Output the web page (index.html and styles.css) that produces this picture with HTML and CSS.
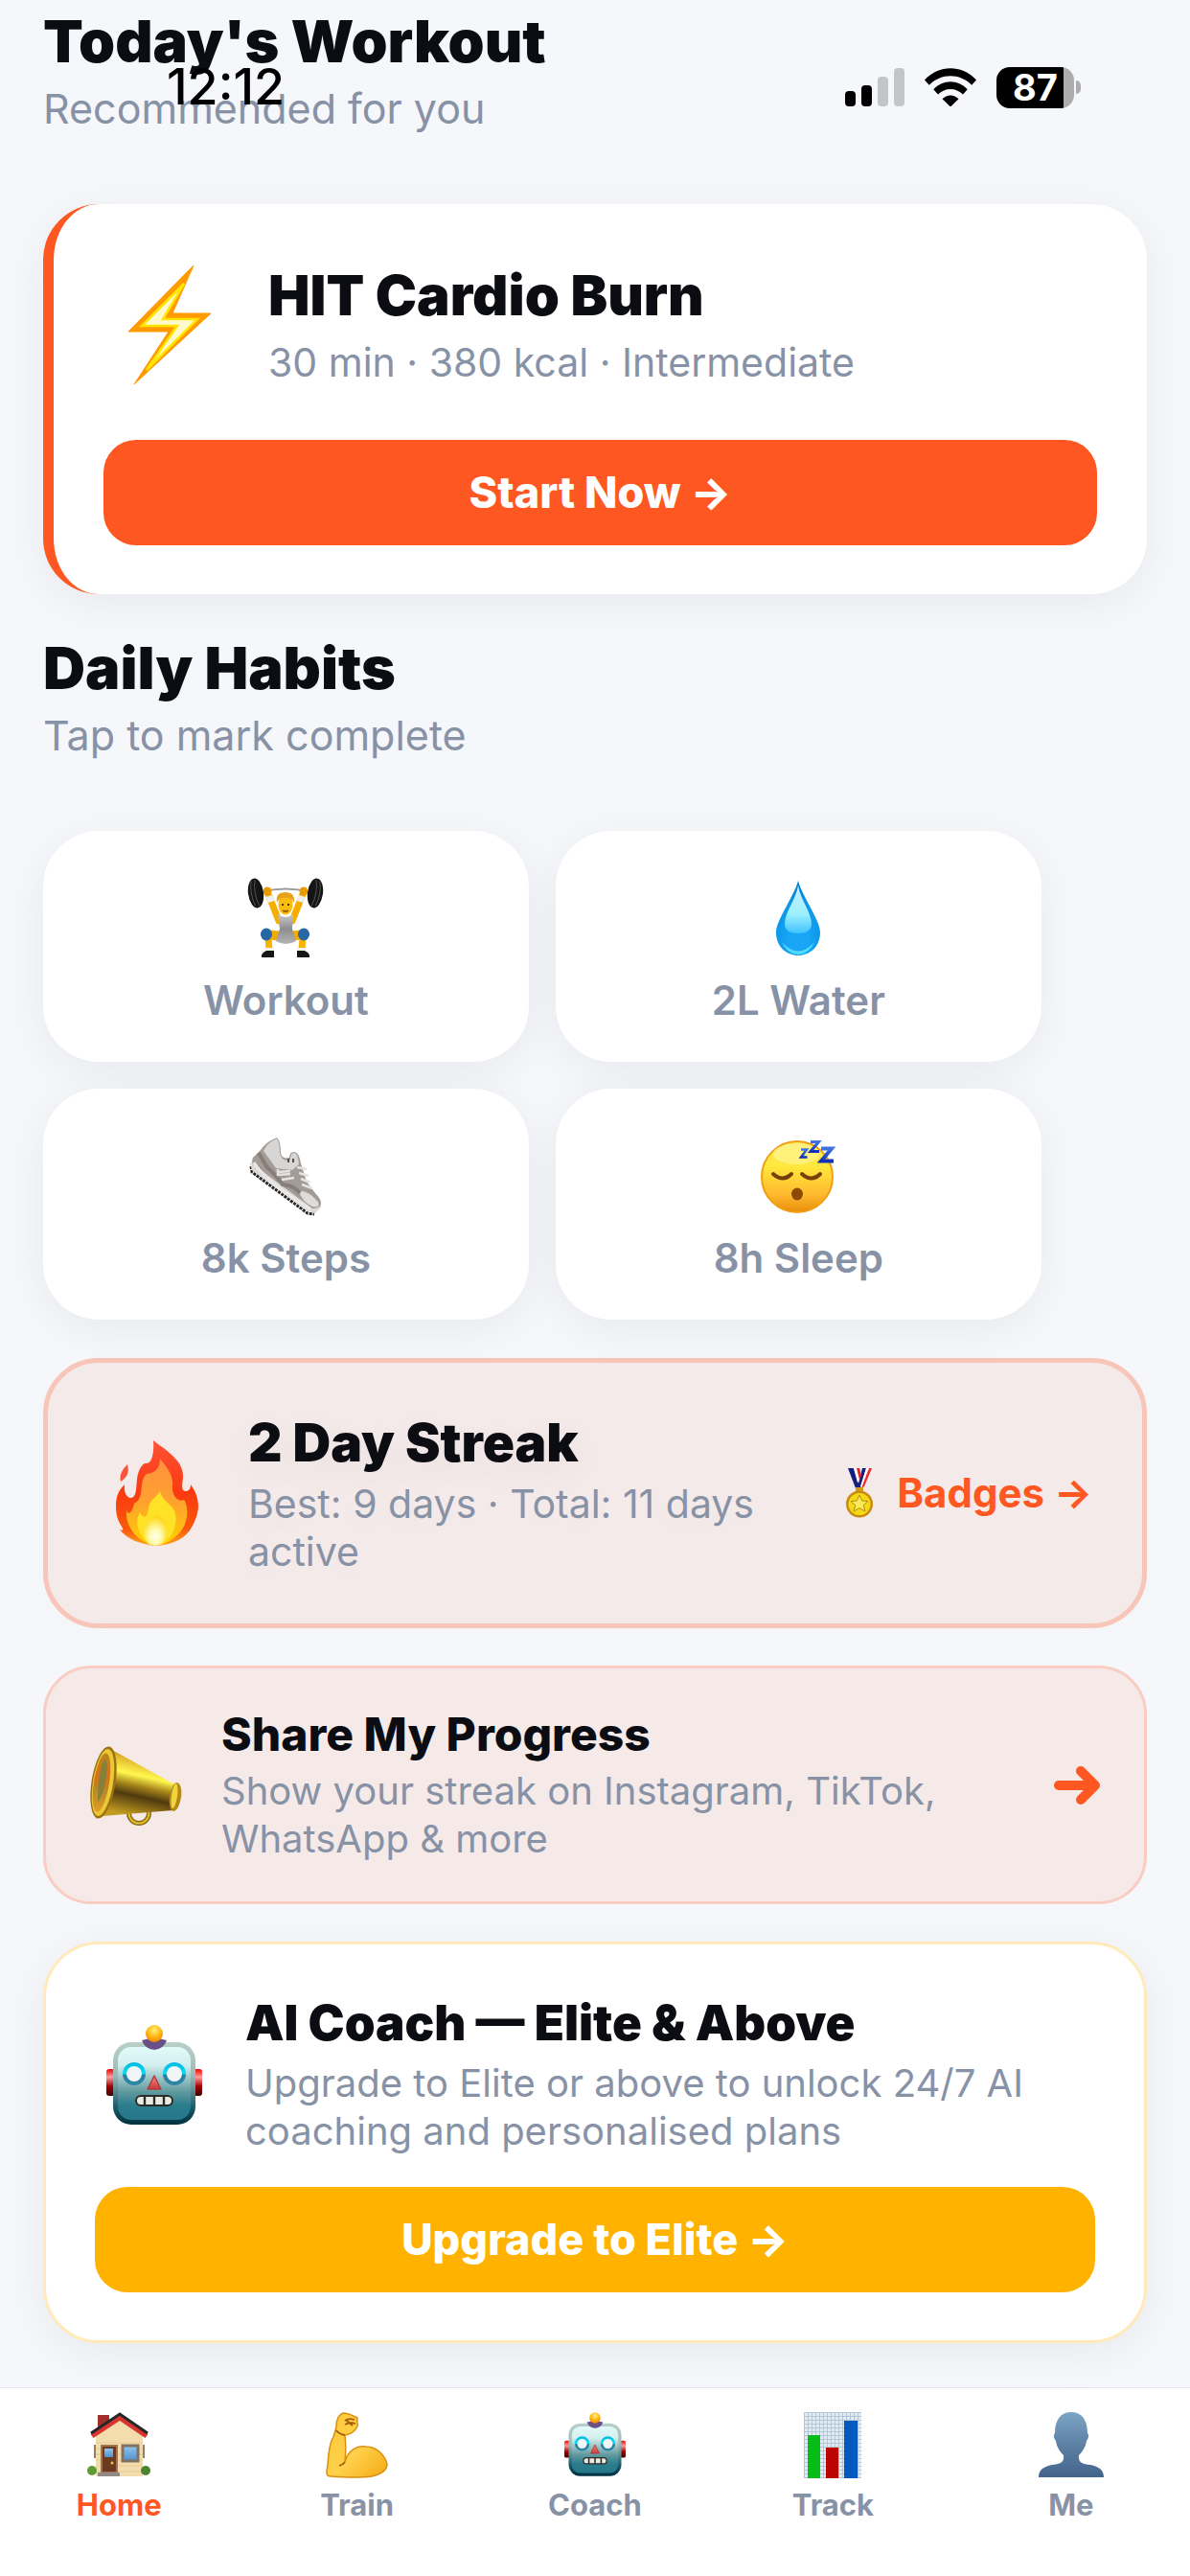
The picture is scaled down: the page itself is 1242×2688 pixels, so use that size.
FILE: index.html
```html
<!DOCTYPE html>
<html lang="en">
<head>
<meta charset="utf-8">
<meta name="viewport" content="width=device-width, initial-scale=1">
<title>Fitness Home</title>
<link rel="stylesheet" href="styles.css">
</head>
<body>
<svg class="defs" aria-hidden="true">
  <defs>
    <linearGradient id="robotHead" x1="0" y1="0" x2="0" y2="1"><stop offset="0" stop-color="#e2fafa"/><stop offset=".25" stop-color="#d3efee"/><stop offset=".62" stop-color="#5f989d"/><stop offset=".8" stop-color="#2a7d8d"/><stop offset="1" stop-color="#277889"/></linearGradient>
    <linearGradient id="robotRim" x1="0" y1="0" x2="0" y2="1"><stop offset="0" stop-color="#b9d0c9"/><stop offset=".4" stop-color="#9db9b6"/><stop offset=".8" stop-color="#155868"/><stop offset="1" stop-color="#00303e"/></linearGradient>
    <linearGradient id="robotEar" x1="0" y1="0" x2="0" y2="1"><stop offset="0" stop-color="#f20000"/><stop offset=".3" stop-color="#ff9c9c"/><stop offset=".65" stop-color="#a00000"/><stop offset="1" stop-color="#3c0000"/></linearGradient>
    <linearGradient id="robotEye" x1="0" y1="0" x2="0" y2="1"><stop offset="0" stop-color="#00b7e0"/><stop offset=".5" stop-color="#00e1f5"/><stop offset=".55" stop-color="#2b7d9c"/><stop offset="1" stop-color="#2f86a6"/></linearGradient>
    <radialGradient id="robotBall" cx=".5" cy=".3" r=".7"><stop offset="0" stop-color="#fff27a"/><stop offset=".6" stop-color="#ffb410"/><stop offset="1" stop-color="#f57f00"/></radialGradient>
    <linearGradient id="robotNose" x1="0" y1="0" x2="0" y2="1"><stop offset="0" stop-color="#ff8a80"/><stop offset="1" stop-color="#c23a3a"/></linearGradient>
  </defs>
  <symbol id="robot" viewBox="0 0 100 104">
    <rect x="0" y="46" width="9" height="28" rx="3" fill="url(#robotEar)"/>
    <rect x="91" y="46" width="9" height="28" rx="3" fill="url(#robotEar)"/>
    <rect x="7" y="18" width="86" height="86" rx="19" fill="url(#robotRim)"/>
    <rect x="12" y="23" width="76" height="76" rx="14" fill="url(#robotHead)"/>
    <path d="M37 16Q50 12 63 16Q60 25 50 26Q40 25 37 16Z" fill="#6a5088"/>
    <ellipse cx="50" cy="9" rx="9" ry="9" fill="url(#robotBall)"/>
    <circle cx="29" cy="51" r="12" fill="url(#robotEye)"/><circle cx="71" cy="51" r="12" fill="url(#robotEye)"/>
    <circle cx="29" cy="51" r="8" fill="#f0f6f7"/><circle cx="71" cy="51" r="8" fill="#f0f6f7"/>
    <path d="M50 53L57 67H43Z" fill="url(#robotNose)" stroke="#b23c40" stroke-width="1.5" stroke-linejoin="round"/>
    <rect x="31" y="74" width="38" height="10" rx="5" fill="#e9eae4" stroke="#2b2b28" stroke-width="2"/>
    <path d="M40 74V84M50 74V84M60 74V84" stroke="#2b2b28" stroke-width="2.4"/>
  </symbol>
</svg>

<div class="status" aria-label="Device status">
  <span class="status-time">12:12</span>
  <span class="status-icons">
    <svg width="62" height="40" viewBox="0 0 62 40" role="img" aria-label="Signal">
      <rect x="0" y="24" width="11" height="16" rx="4"/><rect x="17" y="18" width="11" height="22" rx="4"/>
      <rect x="34" y="9" width="11" height="31" rx="4" fill="#c4c5c9"/><rect x="51" y="0" width="11" height="40" rx="4" fill="#c4c5c9"/>
    </svg>
    <svg width="54" height="40" viewBox="0 0 54 40" role="img" aria-label="Wi-Fi">
      <path d="M0 12.500C15-3.800 39-3.800 54 12.500L49.200 17.700C37 5 17 5 4.800 17.700Z"/>
      <path d="M9.200 22.300C19 11.600 35 11.600 44.800 22.300L40 27.500C33 20 21 20 14 27.500Z"/>
      <path d="M18.500 32.300C23.300 27.200 30.700 27.200 35.500 32.300L27 40.500Z"/>
    </svg>
    <span class="battery"><span class="battery-level">87</span><span class="battery-cap"></span></span>
  </span>
</div>

<main class="page">
  <header class="section-head">
    <h2>Today's Workout</h2>
    <p>Recommended for you</p>
  </header>

  <section class="card workout">
    <div class="workout-row">
      <span class="icon icon-workout">
        <svg width="90" height="126" viewBox="0 0 90 126" aria-hidden="true">
          <path d="M70 1L48 51H88L8 125L44 70H2Z" fill="#ff9a00" stroke="#ff9a00" stroke-width="1" stroke-linejoin="round"/>
          <path d="M60 20L38 57H74L21 110L53 64H16Z" fill="#ffface" stroke="#ffe600" stroke-width="2.500"/>
        </svg>
      </span>
      <div class="copy copy-wide">
        <h3 class="title-xl">HIT Cardio Burn</h3>
        <p>30 min · 380 kcal · Intermediate</p>
      </div>
    </div>
    <button class="cta cta-orange" type="button">Start Now →</button>
  </section>

  <header class="section-head section-head-next">
    <h2>Daily Habits</h2>
    <p>Tap to mark complete</p>
  </header>

  <div class="habits">
    <button class="habit" type="button">
      <svg width="80" height="84" viewBox="0 0 80 84" aria-hidden="true">
        <defs><linearGradient id="suit" x1="0" y1="0" x2="0" y2="1"><stop offset="0" stop-color="#c9c9cc"/><stop offset=".5" stop-color="#8e8e92"/><stop offset="1" stop-color="#b5b5b5"/></linearGradient></defs>
        <path d="M14 15Q40 8 66 15" fill="none" stroke="#9a9a9a" stroke-width="2"/>
        <path d="M22 17L33 45M58 17L47 45" stroke="#f7ae00" stroke-width="7" stroke-linecap="round"/>
        <path d="M23 19L25 25M57 19L55 25" stroke="#eef1f4" stroke-width="7"/>
        <path d="M20 59L36 61M59 59L44 61" stroke="#f4ab00" stroke-width="10" stroke-linecap="round"/>
        <path d="M22 63L23 74M58 63L57 74" stroke="#f7b500" stroke-width="7"/>
        <path d="M32 38Q40 44 48 38L47 53L51 66Q40 72 30 66L34 53Z" fill="url(#suit)"/>
        <circle cx="21" cy="14" r="4.500" fill="#e79b00"/><circle cx="59" cy="14" r="4.500" fill="#e79b00"/>
        <ellipse cx="40" cy="28" rx="7.500" ry="10.500" fill="#fcbc0d"/>
        <path d="M31 26Q29 15 40 15Q50 15 49 26Q46 20 40 21Q34 20 31 26Z" fill="#e8a21a"/>
        <path d="M37 27V29M43 27V29" stroke="#5a3200" stroke-width="2"/><path d="M37 34Q40 36 43 34" stroke="#9a6600" stroke-width="2" fill="none"/>
        <ellipse cx="20" cy="59" rx="6" ry="6.500" fill="#2867a5"/><ellipse cx="59" cy="59" rx="6" ry="6.500" fill="#2867a5"/>
        <path d="M19 73H28V76H19ZM52 73H61V76H52Z" fill="#f3f3f3"/>
        <path d="M15 83Q14 79 20 76H28L28 83ZM65 83Q66 79 60 76H52L52 83Z" fill="#161616"/>
        <g transform="rotate(-8 9 16)"><ellipse cx="9" cy="16" rx="8" ry="15.500" fill="#151515"/><path d="M6 3Q2 16 7 29M10 2Q6 16 11 30" stroke="#505050" fill="none"/></g>
        <g transform="rotate(8 71 16)"><ellipse cx="71" cy="16" rx="8" ry="15.500" fill="#151515"/><path d="M74 3Q78 16 73 29M70 2Q74 16 69 30" stroke="#505050" fill="none"/></g>
      </svg>
      <span>Workout</span>
    </button>
    <button class="habit" type="button">
      <svg width="50" height="84" viewBox="0 0 50 84" aria-hidden="true">
        <defs>
          <radialGradient id="drop" cx=".5" cy=".8" r=".75"><stop offset="0" stop-color="#1ba6f8"/><stop offset=".3" stop-color="#17a5f5"/><stop offset=".65" stop-color="#0e98ea"/><stop offset="1" stop-color="#0583cf"/></radialGradient>
          <linearGradient id="dropShine" x1="0" y1="0" x2="0" y2="1"><stop offset="0" stop-color="#c9efff"/><stop offset=".6" stop-color="#9cf0ff"/><stop offset="1" stop-color="#3fc1ff"/></linearGradient>
        </defs>
        <path d="M25 3C29 19 48 44 48 57C48 72 37 81 25 81C13 81 2 72 2 57C2 44 21 19 25 3Z" fill="url(#drop)"/>
        <path d="M8 67Q25 86 42 67Q37 79 25 80Q13 79 8 67Z" fill="#54dcff"/>
        <path d="M25 8C27 22 39 36 39 48C39 55 33 58 25 58C17 58 11 55 11 48C11 36 23 22 25 8Z" fill="url(#dropShine)"/>
      </svg>
      <span>2L Water</span>
    </button>
    <button class="habit" type="button">
      <svg width="76" height="84" viewBox="0 0 76 84" aria-hidden="true">
        <path d="M2 32L3 38L61 81L68 82" fill="none" stroke="#2a2826" stroke-width="3" stroke-dasharray="3 1"/>
        <path d="M1 29L3 36L62 79L69 81L75 75L74 69L5 25Z" fill="#ddd9d6"/>
        <path d="M29 2Q17 7 12 15L4 23Q1 28 7 32L66 76Q73 76 75 72Q76 67 69 60L60 48L54 29Q52 17 47 17Q42 17 42 23Q34 25 33 18Q33 6 29 2Z" fill="#a39b96"/>
        <path d="M29 3Q18 8 15 16L28 34L45 36L52 30Q51 18 47 18Q43 18 43 25Q34 28 32 18Q32 8 29 3Z" fill="#d8d6d4"/>
        <path d="M52 58Q60 56 72 69Q75 76 66 74Q55 69 52 58Z" fill="#dedcda"/>
        <path d="M10 18L18 32L28 42L35 51Q47 52 53 60" fill="none" stroke="#877e79" stroke-width="4"/>
        <path d="M30 38L43 37M34 46L47 44M50 33L60 35M52 39L62 42M54 45L64 49M55 51L66 55M30 35V41L43 40" stroke="#e5e3e1" stroke-width="2.500" fill="none"/>
        <path d="M5 28Q12 40 32 55L64 77" stroke="#ebe9e7" stroke-width="3" fill="none"/>
        <path d="M41 24V28M46 24V28" stroke="#55504d" stroke-width="2"/>
      </svg>
      <span>8k Steps</span>
    </button>
    <button class="habit" type="button">
      <svg width="80" height="84" viewBox="0 0 80 84" aria-hidden="true">
        <defs>
          <linearGradient id="face" x1="0" y1="0" x2="0" y2="1"><stop offset="0" stop-color="#ffe95a"/><stop offset=".35" stop-color="#ffe83d"/><stop offset=".75" stop-color="#ffb92e"/><stop offset="1" stop-color="#e88d0a"/></linearGradient>
          <linearGradient id="zed" x1="0" y1="0" x2="0" y2="1"><stop offset="0" stop-color="#3f74e0"/><stop offset="1" stop-color="#1030b8"/></linearGradient>
        </defs>
        <circle cx="39" cy="43" r="37" fill="url(#face)" stroke="#f0a012" stroke-width="2"/>
        <ellipse cx="38" cy="19" rx="24" ry="11" fill="#fff8a2" opacity=".55"/>
        <path d="M14 40Q24 49 33 40M44 40Q54 49 63 40" fill="none" stroke="#73400a" stroke-width="4" stroke-linecap="round"/>
        <ellipse cx="39" cy="61" rx="6" ry="6.500" fill="#8d4a05"/>
        <g fill="none" stroke="url(#zed)" stroke-linejoin="miter"><path d="M43 14.500H49L43 22.500H49.500" stroke-width="2.500"/><path d="M53 6.500H61.500L53 16.500H62" stroke-width="3"/><path d="M64 13.500H75L64 26.500H77" stroke-width="4"/></g>
      </svg>
      <span>8h Sleep</span>
    </button>
  </div>

  <section class="card streak">
    <span class="icon icon-row">
      <svg width="88" height="112" viewBox="0 0 88 112" aria-hidden="true">
        <defs>
          <linearGradient id="flameRed" x1="0" y1="0" x2="0" y2="1"><stop offset="0" stop-color="#ff5235"/><stop offset=".5" stop-color="#f93a0f"/><stop offset=".85" stop-color="#fb5a0c"/><stop offset="1" stop-color="#ffa51a"/></linearGradient>
          <linearGradient id="flameMid" x1="0" y1="0" x2="0" y2="1"><stop offset="0" stop-color="#ff9140"/><stop offset=".5" stop-color="#ffa12f"/><stop offset="1" stop-color="#ffd000"/></linearGradient>
          <radialGradient id="flameCore" cx=".5" cy=".7" r=".6"><stop offset="0" stop-color="#fffff0"/><stop offset=".4" stop-color="#fffbaf"/><stop offset="1" stop-color="#ffd91f"/></radialGradient>
        </defs>
        <path d="M40 1C54 12 72 22 71 40C70 48 69 54 74 54C78 54 79 50 79 47C84 54 87 61 87 71C86 80 83 87 78 95C70 106 56 110 43 111C28 110 12 104 5 94C9 96 9 94 7 91C2 83 1 77 1 69C1 58 5 52 10 47C9 57 13 61 17 61C23 60 22 49 23 42C24 31 29 25 32 25C39 26 41 12 40 1Z" fill="url(#flameRed)"/>
        <path d="M13 26C15 35 13 39 6 44C4 37 8 31 13 26Z" fill="#fb5339"/>
        <path d="M47 20C55 30 61 38 60 48C59 60 67 66 72 63C78 71 76 90 66 99C58 107 49 111 41 110C25 109 10 91 12 74C14 80 18 76 20 67C32 61 24 43 33 36C43 35 47 29 47 20Z" fill="url(#flameMid)"/>
        <path d="M47 54C50 66 61 67 63 78C66 91 58 107 46 110H37C24 101 20 86 26 76C31 85 34 80 35 71C36 63 44 60 47 54Z" fill="#ffe126"/>
        <path d="M44 78C53 82 59 94 49 109L42 111L35 109C24 94 33 84 44 78Z" fill="url(#flameCore)"/>
      </svg>
    </span>
    <div class="copy copy-large">
      <h3 class="title-lg">2 Day Streak</h3>
      <p>Best: 9 days · Total: 11 days active</p>
    </div>
    <a class="badges" href="#badges">
      <svg width="30" height="52" viewBox="0 0 30 52" aria-hidden="true">
        <path d="M3 0H9L14 16L18 0H22L16 21H11Z" fill="#14207d"/><path d="M11 0H15L17 8L14 14Z" fill="#e8242c"/><path d="M9 0H12L15 12L13 15ZM22 0H25L18 20L16 19Z" fill="#fff"/><path d="M25 0H28L20 19L17 21Z" fill="#f02a2a"/>
        <rect x="11" y="20" width="8" height="5" fill="#d69a18"/><circle cx="15" cy="37.500" r="14" fill="#c88a12"/><circle cx="15" cy="37.500" r="11.500" fill="#f3d916"/>
        <path d="M15 28L17.800 34L24 34.500L19.300 38.700L21 45L15 41.600L9 45L10.700 38.700L6 34.500L12.200 34Z" fill="#f9ea5c" stroke="#b98912"/>
      </svg>
      <span>Badges →</span>
    </a>
  </section>

  <a class="card share" href="#share">
    <span class="icon icon-share">
      <svg width="98" height="84" viewBox="0 0 98 84" aria-hidden="true">
        <defs>
          <linearGradient id="brass" x1=".65" y1="0" x2=".4" y2="1"><stop offset="0" stop-color="#8a6210"/><stop offset=".2" stop-color="#e3b92c"/><stop offset=".4" stop-color="#fff84f"/><stop offset=".55" stop-color="#a8861a"/><stop offset=".7" stop-color="#4f3a0e"/><stop offset="1" stop-color="#c39d20"/></linearGradient>
          <linearGradient id="bell" x1="0" y1="0" x2="0" y2="1"><stop offset="0" stop-color="#b98620"/><stop offset=".4" stop-color="#d97012"/><stop offset=".65" stop-color="#b88a2a"/><stop offset="1" stop-color="#e59a22"/></linearGradient>
        </defs>
        <circle cx="52" cy="71" r="10.500" fill="none" stroke="#8c6a10" stroke-width="5"/><circle cx="52" cy="71" r="10.500" fill="none" stroke="#e2be2a" stroke-width="2"/>
        <path d="M24 5L91 42L88 68L14 74Z" fill="url(#brass)"/>
        <ellipse cx="90" cy="54" rx="6" ry="15" transform="rotate(8 90 54)" fill="#b48716"/><ellipse cx="89" cy="53" rx="3" ry="13" transform="rotate(8 89 53)" fill="#f0d43a"/>
        <ellipse cx="15" cy="39" rx="12.500" ry="38" transform="rotate(9 15 39)" fill="#9c6f12"/>
        <ellipse cx="14.500" cy="39" rx="10.500" ry="35.500" transform="rotate(9 14.500 39)" fill="#e9c934"/>
        <ellipse cx="13" cy="39" rx="8" ry="31" transform="rotate(9 13 39)" fill="url(#bell)"/>
        <path d="M17 14Q9 24 9 60Q18 46 19 20Z" fill="#85813a"/>
      </svg>
    </span>
    <div class="copy">
      <h3 class="title-sm">Share My Progress</h3>
      <p>Show your streak on Instagram, TikTok, WhatsApp &amp; more</p>
    </div>
    <svg class="share-arrow" width="50" height="42" viewBox="0 0 50 42" aria-hidden="true"><path d="M6 21H43M29 6L44 21L29 36" fill="none" stroke="#ff5722" stroke-width="10" stroke-linecap="round" stroke-linejoin="round"/></svg>
  </a>

  <section class="card coach">
    <div class="coach-row">
      <span class="icon icon-row"><svg width="100" height="104" aria-hidden="true"><use href="#robot"/></svg></span>
      <div class="copy">
        <h3 class="title-md">AI Coach — Elite &amp; Above</h3>
        <p>Upgrade to Elite or above to unlock 24/7 AI coaching and personalised plans</p>
      </div>
    </div>
    <button class="cta cta-amber" type="button">Upgrade to Elite →</button>
  </section>
</main>

<nav class="tabs" aria-label="Main">
  <a class="tab tab-active" href="#home" aria-current="page">
    <svg width="66" height="70" viewBox="0 0 66 70" aria-hidden="true">
      <defs><linearGradient id="glass" x1="0" y1="0" x2="0" y2="1"><stop offset="0" stop-color="#8ec6f0"/><stop offset="1" stop-color="#4f8fcd"/></linearGradient></defs>
      <rect x="11" y="3" width="12" height="20" fill="#a1302a"/>
      <path d="M9 24L34 5L58 24V67H9Z" fill="#f3dcae"/>
      <path d="M9 32H58M9 38H58M9 44H58M9 50H58M9 56H58M9 62H58" stroke="#e5cb98"/>
      <path d="M5 25L34 6L62 25" fill="none" stroke="#d8352f" stroke-width="5"/><path d="M4 22L34 2L63 22" fill="none" stroke="#26262a" stroke-width="3"/>
      <path d="M8 34V48M59 34V48" stroke="#8c8074" stroke-width="2"/>
      <rect x="15" y="35" width="16" height="28" fill="#6c3a22" stroke="#a0744d" stroke-width="2"/><rect x="18" y="38" width="9" height="9" fill="url(#glass)"/><circle cx="26" cy="53" r="1.500" fill="#f4c542"/>
      <rect x="37" y="35" width="16" height="16" fill="url(#glass)" stroke="#837161" stroke-width="3"/>
      <circle cx="5" cy="61" r="5" fill="#5f9a34"/><circle cx="61" cy="61" r="5" fill="#4d8530"/><rect x="11" y="63" width="23" height="4" fill="#928a84"/>
    </svg>
    <span>Home</span>
  </a>
  <a class="tab" href="#train">
    <svg width="66" height="70" viewBox="0 0 66 70" aria-hidden="true">
      <defs><linearGradient id="skin" x1="0" y1="0" x2="1" y2="1"><stop offset="0" stop-color="#ffc83a"/><stop offset=".55" stop-color="#ffd04a"/><stop offset="1" stop-color="#f3a914"/></linearGradient></defs>
      <path d="M18 1C24 1 29 4 33 6C32 9 34 12 33 15C31 19 27 23 20 24C21 34 21 42 20 52C23 40 32 35 42 36C54 36 62 46 64 54C64 61 57 65 48 67C35 69 18 68 5 67C1 67 1 65 1 61C3 53 2 40 6 30C9 25 10 20 11 15C11 8 13 3 18 1Z" fill="url(#skin)" stroke="#d98f10" stroke-width="1.500"/>
      <path d="M20 9Q24 6 30 8M20 13Q25 10 31 12M22 9L28 14M20 24Q14 23 11 19M20 52Q18 55 14 56" fill="none" stroke="#a25d05" stroke-width="1.800"/>
    </svg>
    <span>Train</span>
  </a>
  <a class="tab" href="#coach">
    <svg width="64" height="70" viewBox="0 0 64 70" aria-hidden="true"><use href="#robot" width="64" height="67"/></svg>
    <span>Coach</span>
  </a>
  <a class="tab" href="#track">
    <svg width="60" height="70" viewBox="0 0 60 70" aria-hidden="true">
      <defs><pattern id="grid" width="4" height="4" patternUnits="userSpaceOnUse"><rect width="4" height="4" fill="#b3c4d2"/><rect x="1" y="1" width="3" height="3" fill="#e1edf6"/></pattern></defs>
      <rect width="60" height="69" fill="url(#grid)"/>
      <rect x="4" y="24" width="13" height="45" fill="#06bd18"/><rect x="23" y="37" width="13" height="32" fill="#bb0303"/><rect x="42" y="9" width="14" height="60" fill="#0459c0"/>
    </svg>
    <span>Track</span>
  </a>
  <a class="tab" href="#me">
    <svg width="68" height="70" viewBox="0 0 68 70" aria-hidden="true">
      <defs><linearGradient id="bust" x1="0" y1="0" x2="0" y2="1"><stop offset="0" stop-color="#7ca5c5"/><stop offset=".5" stop-color="#5d80a5"/><stop offset="1" stop-color="#44658b"/></linearGradient></defs>
      <path d="M34 0C45 0 51 8 51 22C53 23 52 28 50 30C49 37 45 42 42 45C41 53 46 54 54 55C63 57 68 60 68 68H0C0 60 5 57 14 55C22 54 27 53 26 45C23 42 19 37 18 30C16 28 15 23 17 22C17 8 23 0 34 0Z" fill="url(#bust)"/>
    </svg>
    <span>Me</span>
  </a>
</nav>
</body>
</html>
```
FILE: styles.css
```css
* {
  box-sizing: border-box;
}

body {
  margin: 0;
  min-height: 100vh;
  display: flex;
  flex-direction: column;
  position: relative;
  background: #f5f7fb;
  color: #0c0d13;
  font-family: Inter, "Liberation Sans", sans-serif;
}

h2,
h3,
p {
  margin: 0;
}

a {
  color: inherit;
  text-decoration: none;
}

button {
  border: 0;
  font-family: inherit;
  cursor: pointer;
}

svg {
  display: block;
  flex: none;
}

.defs {
  position: absolute;
  width: 0;
  height: 0;
}

/* Device status bar, floats above the scrolled page */
.status {
  position: absolute;
  top: 60px;
  left: 0;
  right: 0;
  display: flex;
  justify-content: space-between;
  align-items: center;
  padding: 0 114px 0 174px;
  color: #000;
}

.status-time {
  font-size: 52px;
  line-height: 62px;
  font-weight: 500;
}

.status-icons {
  display: flex;
  align-items: center;
  gap: 21px;
}

.battery {
  display: flex;
  align-items: center;
  gap: 2px;
}

.battery-level {
  width: 81px;
  height: 43px;
  border-radius: 14px;
  background: linear-gradient(90deg, #000 70px, #adadaf 70px);
  color: #fff;
  font-size: 38px;
  line-height: 43px;
  font-weight: 700;
  text-align: center;
}

.battery-cap {
  width: 5px;
  height: 14px;
  border-radius: 0 5px 5px 0;
  background: #adadaf;
}

/* Page content */
.page {
  flex: 1;
  padding: 6px 45px 45px;
}

.section-head {
  display: grid;
  gap: 8px;
  margin-bottom: 75px;
}

.section-head-next {
  margin-top: 40px;
}

.section-head h2 {
  font-size: 61px;
  line-height: 74px;
  font-weight: 900;
}

.section-head p {
  color: #8892a6;
  font-size: 43px;
  line-height: 50px;
}

.card {
  border-radius: 58px;
}

.workout,
.habit,
.coach {
  background: #fff;
  box-shadow: 0 10px 48px rgba(12, 13, 19, 0.06);
}

.icon {
  display: flex;
  flex: none;
  justify-content: center;
  align-items: center;
}

.copy {
  flex: 1;
  display: grid;
  gap: 6px;
}

.copy p {
  color: #8892a6;
  font-size: 40px;
  line-height: 50px;
}

.copy-wide {
  gap: 11px;
}

.copy-wide p,
.copy-large p {
  font-size: 41px;
}

.title-xl {
  font-size: 58px;
  line-height: 68px;
  font-weight: 900;
}

.title-lg {
  font-size: 55px;
  line-height: 66px;
  font-weight: 900;
}

.title-md {
  font-size: 51px;
  line-height: 60px;
  font-weight: 900;
}

.title-sm {
  font-size: 48px;
  line-height: 57px;
  font-weight: 800;
}

.cta {
  display: block;
  width: 100%;
  padding: 30px;
  border-radius: 34px;
  color: #fff;
  font-size: 45px;
  line-height: 50px;
  font-weight: 800;
}

.cta-orange {
  background: #ff5722;
}

.cta-amber {
  background: #ffb300;
}

.workout {
  padding: 51px 52px;
  border-left: 11px solid #ff5722;
}

.workout-row {
  display: flex;
  align-items: center;
  gap: 34px;
  margin-bottom: 46px;
}

.icon-workout {
  width: 138px;
  height: 149px;
}

.icon-row {
  width: 124px;
}

.icon-share {
  width: 106px;
}

.habits {
  display: flex;
  flex-wrap: wrap;
  gap: 28px;
}

.habit {
  width: 44%;
  display: flex;
  flex-direction: column;
  align-items: center;
  gap: 19px;
  padding: 49px 20px 39px;
  border-radius: 58px;
  color: #8892a6;
  font-size: 42px;
  line-height: 50px;
  font-weight: 600;
}

.streak {
  display: flex;
  align-items: center;
  gap: 33px;
  margin-top: 40px;
  padding: 50px 52px;
  border: 5px solid #f8c6b8;
  background: #f4eae9;
  box-shadow: 0 10px 40px rgba(12, 13, 19, 0.01);
}

.streak .copy {
  text-shadow: 0 10px 40px rgba(12, 13, 19, 0.06);
}

.badges {
  flex: none;
  display: flex;
  align-items: center;
  gap: 24px;
  color: #ff5722;
  font-size: 42px;
  line-height: 50px;
  font-weight: 700;
}

.share {
  display: flex;
  align-items: center;
  gap: 36px;
  margin-top: 39px;
  padding: 40px 45px 40px 41px;
  border: 3px solid #f9cdc1;
  border-radius: 50px;
  background: #f5eae8;
}

.coach {
  margin-top: 39px;
  padding: 52px 51px 50px;
  border: 3px solid #ffeab8;
}

.coach-row {
  display: flex;
  align-items: center;
  gap: 33px;
  margin-bottom: 33px;
}

.coach .copy {
  gap: 8px;
}

/* Bottom tabs */
.tabs {
  position: relative;
  display: flex;
  padding: 25px 0 55px;
  border-top: 1px solid #e3e6f0;
  background: #fff;
}

.tab {
  flex: 1;
  display: flex;
  flex-direction: column;
  align-items: center;
  gap: 8px;
  color: #8892a6;
  font-size: 31px;
  line-height: 38px;
  font-weight: 700;
}

.tab-active {
  color: #ff5722;
}
```
